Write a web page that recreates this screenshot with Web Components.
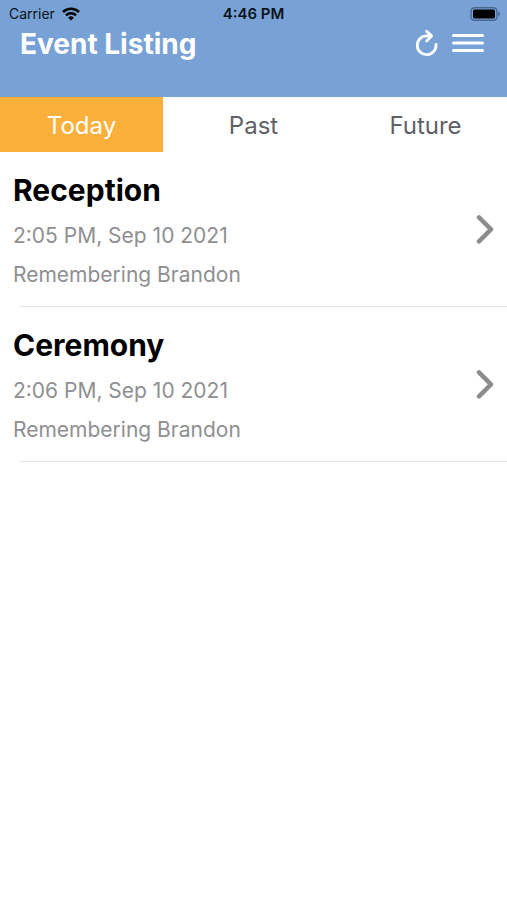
<!DOCTYPE html>
<html lang="en">
<head>
<meta charset="utf-8">
<meta name="viewport" content="width=device-width, initial-scale=1">
<title>Event Listing</title>
<style>
  body {
    margin: 0;
    background: #fff;
    font-family: Inter, "Liberation Sans", sans-serif;
  }
</style>
</head>
<body>
<event-app></event-app>

<script>
class StatusBar extends HTMLElement {
  constructor() {
    super();
    this.attachShadow({ mode: "open" });
  }

  static get styles() {
    return /* css */`
      :host {
        display: grid;
        grid-template-columns: 1fr auto 1fr;
        align-items: center;
        height: 28px;
        padding: 0 6px;
        color: #0b1219;
        font-size: 14px;
        line-height: 28px;
      }

      .carrier {
        display: flex;
        align-items: center;
        gap: 7px;
        padding-left: 3px;
      }

      .time {
        font-size: 15px;
        font-weight: 600;
      }

      .battery {
        justify-self: end;
      }

      svg {
        display: block;
      }
    `;
  }

  connectedCallback() {
    this.render();
  }

  render() {
    this.shadowRoot.innerHTML = /* html */`
    <style>${StatusBar.styles}</style>
    <div class="carrier">
      <span>${this.getAttribute("carrier")}</span>
      <svg width="18" height="14" viewBox="0 0 18 14" fill="none" stroke="#000" stroke-width="2.6">
        <path d="M1 5a11.4 11.4 0 0 1 16 0M4 8.3a7.1 7.1 0 0 1 10 0" />
        <path d="M9 13.6 6.1 10.7a4.1 4.1 0 0 1 5.8 0z" fill="#000" stroke="none" />
      </svg>
    </div>
    <span class="time">${this.getAttribute("time")}</span>
    <svg class="battery" width="31" height="14" viewBox="0 0 31 14">
      <rect x="1" y=".8" width="26" height="12.4" rx="3.6" fill="none" stroke="#47678c" stroke-width="1.4" />
      <rect x="3" y="2.6" width="22" height="8.8" rx="1.6" />
      <path d="M28.4 4.8q1.8.8 1.8 2.2t-1.8 2.2z" fill="#47678c" />
    </svg>`;
  }
}

class NavBar extends HTMLElement {
  constructor() {
    super();
    this.attachShadow({ mode: "open" });
  }

  static get styles() {
    return /* css */`
      :host {
        display: flex;
        align-items: center;
        gap: 12px;
        height: 32px;
        padding: 0 22px 37px 20px;
        color: #fff;
      }

      h1 {
        flex: 1;
        margin: 0;
        font-size: 28px;
        font-weight: 700;
        line-height: 32px;
      }

      button {
        padding: 0;
        border: 0;
        background: none;
        color: inherit;
        cursor: pointer;
      }

      svg {
        display: block;
        fill: none;
        stroke: currentColor;
        stroke-linecap: round;
        stroke-linejoin: round;
      }
    `;
  }

  connectedCallback() {
    this.render();
  }

  render() {
    this.shadowRoot.innerHTML = /* html */`
    <style>${NavBar.styles}</style>
    <h1><slot></slot></h1>
    <button type="button" aria-label="Refresh">
      <svg width="26" height="30" viewBox="0 0 26 30" stroke-width="2.8">
        <path d="M18 6.9H13.6A9.4 9.4 0 1 0 23 15.4" />
        <path d="M13.6 2.3 18.6 6.9 13.6 11.9" />
      </svg>
    </button>
    <button type="button" aria-label="Menu">
      <svg width="34" height="24" viewBox="0 0 34 24" stroke-width="3.2">
        <path d="M2.6 3.5h28.8M2.6 11h28.8M2.6 18.5h28.8" />
      </svg>
    </button>`;
  }
}

class TabBar extends HTMLElement {
  constructor() {
    super();
    this.attachShadow({ mode: "open" });
  }

  static get styles() {
    return /* css */`
      :host {
        display: block;
      }

      nav {
        display: grid;
        grid-template-columns: repeat(3, 1fr);
        gap: 9px;
      }

      button {
        height: 55px;
        padding: 2px 0 0;
        border: 0;
        background: none;
        color: #606166;
        font: inherit;
        font-size: 24px;
        line-height: 32px;
        cursor: pointer;
      }

      button[aria-pressed="true"] {
        background: #fbb03c;
        color: #fff;
      }
    `;
  }

  connectedCallback() {
    this.render();
    this.shadowRoot.addEventListener("click", (e) => {
      const tab = e.target.closest("button");
      if (!tab) return;
      this.shadowRoot.querySelectorAll("button").forEach((b) => {
        b.setAttribute("aria-pressed", b === tab);
      });
    });
  }

  render() {
    this.shadowRoot.innerHTML = /* html */`
    <style>${TabBar.styles}</style>
    <nav>
      <button type="button" aria-pressed="true">Today</button>
      <button type="button" aria-pressed="false">Past</button>
      <button type="button" aria-pressed="false">Future</button>
    </nav>`;
  }
}

class EventRow extends HTMLElement {
  constructor() {
    super();
    this.attachShadow({ mode: "open" });
  }

  static get styles() {
    return /* css */`
      :host {
        display: block;
      }

      a {
        display: flex;
        align-items: center;
        justify-content: space-between;
        padding: 0 12px 0 13px;
        color: #8f8f92;
        text-decoration: none;
      }

      .text {
        padding: 19px 0 12px;
      }

      h2 {
        margin: 0 0 6px;
        color: #000;
        font-size: 30px;
        font-weight: 700;
        line-height: 39px;
      }

      p {
        margin: 0;
        font-size: 21px;
        line-height: 39px;
      }

      hr {
        height: 1px;
        margin: 0 0 0 20px;
        border: 0;
        background: #e4e4e6;
      }

      svg {
        display: block;
      }
    `;
  }

  connectedCallback() {
    this.render();
  }

  render() {
    this.shadowRoot.innerHTML = /* html */`
    <style>${EventRow.styles}</style>
    <a href="#">
      <div class="text">
        <h2><slot></slot></h2>
        <p>${this.getAttribute("when")}</p>
        <p>${this.getAttribute("note")}</p>
      </div>
      <svg width="20" height="30" viewBox="0 0 20 30" fill="none" stroke="#8c8c8c"
        stroke-width="4.4" stroke-linecap="round" stroke-linejoin="round" aria-hidden="true">
        <path d="M4 3.4 16 15.4 4 27.4" />
      </svg>
    </a>
    <hr>`;
  }
}

class EventApp extends HTMLElement {
  constructor() {
    super();
    this.attachShadow({ mode: "open" });
  }

  static get styles() {
    return /* css */`
      :host {
        display: block;
      }

      header {
        background: #78a2d6;
      }
    `;
  }

  connectedCallback() {
    this.render();
  }

  render() {
    this.shadowRoot.innerHTML = /* html */`
    <style>${EventApp.styles}</style>
    <header>
      <status-bar carrier="Carrier" time="4:46 PM"></status-bar>
      <nav-bar>Event Listing</nav-bar>
    </header>
    <tab-bar></tab-bar>
    <main>
      <event-row when="2:05 PM, Sep 10 2021" note="Remembering Brandon">Reception</event-row>
      <event-row when="2:06 PM, Sep 10 2021" note="Remembering Brandon">Ceremony</event-row>
    </main>`;
  }
}

customElements.define("status-bar", StatusBar);
customElements.define("nav-bar", NavBar);
customElements.define("tab-bar", TabBar);
customElements.define("event-row", EventRow);
customElements.define("event-app", EventApp);
</script>
</body>
</html>
